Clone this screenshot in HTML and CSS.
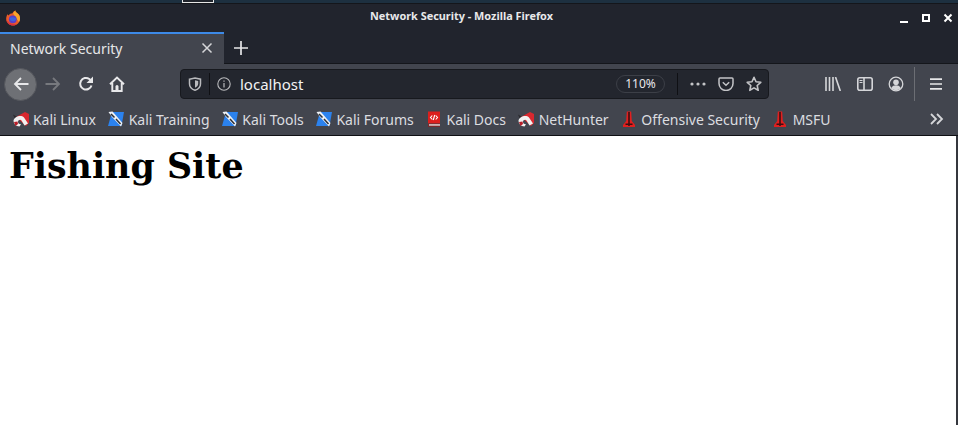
FILE: index.html
```html
<!DOCTYPE html>
<html lang="en">
<head>
<meta charset="utf-8">
<title>Network Security</title>
<link rel="stylesheet" href="styles.css">
</head>
<body>
<div class="desktop-strip"><span class="desk-thumb"></span></div>
<div class="window">
  <header class="titlebar">
    <svg class="ff-logo" viewBox="0 0 16 16" width="16" height="16">
      <path d="M1.200 9.500C1 7.500 1.600 5.500 2.600 4.200L3.500 5.500C4.500 4 6 3.200 7.500 3.200 8 2 9 1 10.500.6 10.300 1.600 10.800 2.300 11.800 2.800 14 4 15.200 6.500 15 9c-.3 3.800-3.300 6.500-7 6.500s-6.500-2.700-6.800-6z" fill="#ea5a2a"/>
      <path d="M10.500.6c-.2 1 .3 1.700 1.300 2.200 2.200 1.200 3.400 3.700 3.200 6.200-.1 1.200-.4 2.200-1 3.100L10 6.500 8.200 3.600C8.600 2.200 9.300 1 10.500.6z" fill="#f7a52b"/>
      <path d="M1.200 9.500C1.700 12.500 4.300 15.500 8 15.500c1.500 0 2.800-.4 3.900-1.200C8 14.500 3.500 13.500 1.200 9.500z" fill="#d92f3f"/>
      <circle cx="7.800" cy="9.300" r="3.900" fill="#5a3dc8"/>
      <path d="M4.600 8c1.600-1.200 4.400-1.200 6.700.4-.4 2.700-3.700 3.900-5.900 1.800z" fill="#3f63dc"/>
    </svg>
    <span class="title-text">Network Security - Mozilla Firefox</span>
    <div class="win-controls">
      <svg viewBox="0 0 10 10" width="10" height="10"><path d="M1 9h8" stroke="#fff" stroke-width="2"/></svg>
      <svg viewBox="0 0 10 10" width="10" height="10"><path d="M2 2h6v6H2z" fill="none" stroke="#fff" stroke-width="2"/></svg>
      <svg viewBox="0 0 10 10" width="10" height="10"><path d="M1.500 1.500l7 7M8.500 1.500l-7 7" stroke="#fff" stroke-width="2"/></svg>
    </div>
  </header>
  <div class="tabstrip">
    <div class="tab">
      <span class="tab-label">Network Security</span>
      <svg class="tab-close" viewBox="0 0 12 12" width="12" height="12"><path d="M1.500 1.500l9 9M10.500 1.500l-9 9" stroke="#d5d6d9" stroke-width="1.500"/></svg>
    </div>
    <svg class="new-tab" viewBox="0 0 14 14" width="14" height="14"><path d="M7 0v14M0 7h14" stroke="#e6e6e8" stroke-width="1.700"/></svg>
  </div>
  <nav class="navbar">
    <button class="back" aria-label="Back">
      <svg viewBox="0 0 16 16" width="16" height="16"><path d="M15.500 8H2M8 2L2 8l6 6" fill="none" stroke="#e8e8ea" stroke-width="1.800"/></svg>
    </button>
    <svg class="nav-icon fwd" viewBox="0 0 16 16" width="16" height="16"><path d="M.5 8H14M8 2l6 6-6 6" fill="none" stroke="#77797e" stroke-width="1.800"/></svg>
    <svg class="nav-icon reload" viewBox="0 0 16 16" width="16" height="16"><path d="M13.500 9.500A5.800 5.800 0 1 1 11.300 3L13.500 5" fill="none" stroke="#e8e8ea" stroke-width="2"/><path d="M15 .5V7H8.500z" fill="#e8e8ea"/></svg>
    <svg class="nav-icon home" viewBox="0 0 16 16" width="16" height="16"><path d="M1 8.300L8 1.500l7 6.800M3.300 7v8h9.400V7" fill="none" stroke="#e8e8ea" stroke-width="1.900"/><path d="M6.500 15v-4.500a1.500 1.500 0 0 1 3 0V15z" fill="#e8e8ea"/></svg>
    <div class="urlbar">
      <svg class="shield" viewBox="0 0 14 14" width="14" height="14"><path d="M1.500 2.200L7 1l5.500 1.200v4.500C12.500 10 10 12.300 7 13.300 4 12.300 1.500 10 1.500 6.700z" fill="none" stroke="#b9babd" stroke-width="1.500"/><path d="M7 3.200l3.200.8v2.800c0 1.800-1.500 3.300-3.200 4z" fill="#b9babd"/></svg>
      <span class="url-sep"></span>
      <svg class="info" viewBox="0 0 14 14" width="14" height="14"><circle cx="7" cy="7" r="6.200" fill="none" stroke="#b9babd" stroke-width="1.100"/><path d="M7 6v4.500M7 3.500v1.300" stroke="#b9babd" stroke-width="1.200"/></svg>
      <span class="url-text">localhost</span>
      <span class="zoom-pill">110%</span>
      <span class="url-sep action-sep"></span>
      <svg class="act dots" viewBox="0 0 16 4" width="16" height="4"><circle cx="2" cy="2" r="1.600" fill="#c3c4c7"/><circle cx="8" cy="2" r="1.600" fill="#c3c4c7"/><circle cx="14" cy="2" r="1.600" fill="#c3c4c7"/></svg>
      <svg class="act pocket" viewBox="0 0 16 14" width="16" height="14"><path d="M1 2a1 1 0 0 1 1-1h12a1 1 0 0 1 1 1v4.500a7 7 0 0 1-14 0z" fill="none" stroke="#c3c4c7" stroke-width="1.500"/><path d="M4.800 5.200L8 8.200l3.200-3" fill="none" stroke="#c3c4c7" stroke-width="1.500"/></svg>
      <svg class="act star" viewBox="0 0 16 16" width="16" height="16"><path d="M8 1.300l2 4.500 4.800.5-3.600 3.200 1 4.800L8 11.900l-4.200 2.400 1-4.800L1.200 6.300 6 5.800z" fill="none" stroke="#c3c4c7" stroke-width="1.600" stroke-linejoin="round"/></svg>
    </div>
    <div class="tools">
      <svg viewBox="0 0 16 14" width="16" height="14"><path d="M1 0v14M4.500 0v14M8 0v14M10.500 0l4.800 14" fill="none" stroke="#d5d6d9" stroke-width="1.600"/></svg>
      <svg viewBox="0 0 16 14" width="16" height="14"><rect x=".8" y=".8" width="14.400" height="12.400" rx="2" fill="none" stroke="#d5d6d9" stroke-width="1.600"/><path d="M7 1v12" stroke="#d5d6d9" stroke-width="1.600"/><path d="M2.500 3.500h3M2.500 5.500h3" stroke="#d5d6d9"/></svg>
      <svg viewBox="0 0 16 16" width="16" height="16"><circle cx="8" cy="8" r="6.800" fill="none" stroke="#d5d6d9" stroke-width="1.300"/><circle cx="8" cy="6.300" r="2.800" fill="#d5d6d9"/><path d="M3.300 12c1-2 2.800-2.700 4.700-2.700s3.700.7 4.700 2.700c-1.200 1.400-2.900 2.100-4.700 2.100S4.500 13.400 3.300 12z" fill="#d5d6d9"/></svg>
    </div>
    <span class="tool-sep"></span>
    <svg class="menu" viewBox="0 0 12 12" width="12" height="12"><path d="M0 1.200h12M0 6h12M0 10.800h12" stroke="#e6e6e8" stroke-width="1.700"/></svg>
  </nav>
  <div class="bookmarks">
    <a class="bm"><svg class="fav" viewBox="0 0 16 16"><use href="#kali-red"/></svg>Kali Linux</a>
    <a class="bm"><svg class="fav" viewBox="0 0 16 16"><use href="#kali-blue"/></svg>Kali Training</a>
    <a class="bm"><svg class="fav" viewBox="0 0 16 16"><use href="#kali-blue"/></svg>Kali Tools</a>
    <a class="bm"><svg class="fav" viewBox="0 0 16 16"><use href="#kali-blue"/></svg>Kali Forums</a>
    <a class="bm"><svg class="fav" viewBox="0 0 16 16"><use href="#kali-doc"/></svg>Kali Docs</a>
    <a class="bm"><svg class="fav" viewBox="0 0 16 16"><use href="#kali-red"/></svg>NetHunter</a>
    <a class="bm"><svg class="fav" viewBox="0 0 16 16"><use href="#offsec"/></svg>Offensive Security</a>
    <a class="bm"><svg class="fav" viewBox="0 0 16 16"><use href="#offsec"/></svg>MSFU</a>
    <svg class="more" viewBox="0 0 14 12" width="14" height="12"><path d="M1 1l5 5-5 5M7 1l5 5-5 5" fill="none" stroke="#d5d6d9" stroke-width="1.800"/></svg>
  </div>
  <main class="page"><h1 class="page-title">Fishing Site</h1></main>
</div>
<svg class="defs" width="0" height="0" aria-hidden="true">
  <defs>
    <g id="kali-red">
      <path d="M3 6L12 1l4 2v9l-3 3z" fill="#d8282f"/>
      <path d="M.5 9.500C1.500 5.500 8 3.500 11 6.500l4 6-3.500 2-3-5C7.500 8 5 8.800 5 11c0 1.300 1.300 2.300 3 2.300L6.500 15.500C3 15.500.5 12.500.5 9.500z" fill="#f1f1f1"/>
      <path d="M0 3.500l3.500 2-2 1.500z" fill="#2a2a2e"/>
      <path d="M1 11l3.500-.5.5 2.500-2.500 2z" fill="#b71d28"/>
    </g>
    <g id="kali-blue">
      <path d="M4 1h12l-2.500 14H0z" fill="#2b82ee"/>
      <path d="M.5 1l4-.5 10 11.500-1.500 3.500L4 6z" fill="#eef1f5"/>
      <path d="M3 3l3.500 3.500M8 8l4.500 5" stroke="#2b2f37" stroke-width="1.500"/>
    </g>
    <g id="kali-doc">
      <path d="M2 .5h12v12H2z" fill="#dc1f1d"/>
      <path d="M2 12.500h12V16H2z" fill="#7a2a2c"/>
      <path d="M3 13.300h11v1.300H3z" fill="#ececec"/>
      <path d="M6.300 4.500L4.500 6.500l1.800 2M9.700 4.500l1.800 2-1.800 2M8.700 4l-1.400 5" fill="none" stroke="#fff" stroke-width="1.100"/>
    </g>
    <g id="offsec">
      <path d="M5.800 .5h4.400l.6 9.500 3.200 4v2h-12v-2l3.200-4z" fill="#e01f1f"/>
      <path d="M7.200 1h1.600v14H7.200zM4.500 12.500h7V14h-7z" fill="#3c0f10"/>
    </g>
  </defs>
</svg>
</body>
</html>
```

FILE: styles.css
```css
* { box-sizing: border-box; }
html, body { margin: 0; height: 100%; overflow: hidden; background: #fff; }
body { display: flex; flex-direction: column; font-family: "Noto Sans", sans-serif; }

.desktop-strip { height: 3px; background: #1d3040; flex: none; }
.desk-thumb { display: block; margin-left: 182px; width: 32px; height: 3px; border: 1px solid #e6e6e6; border-top: 0; background: #20242c; }

.window { flex: 1; display: flex; flex-direction: column; min-height: 0; border-right: 2px solid #35373e; }

.titlebar { height: 29px; flex: none; background: #21242d; display: flex; align-items: center; padding: 0 5px 1px 5px; position: relative; margin-right: -2px; border-top: 1px solid #14161b; }
.ff-logo { flex: none; margin-top: 1px; }
.title-text { position: absolute; left: 370px; top: 4px; font-size: 10.9px; line-height: 16px; font-weight: 700; color: #e8e8ea; white-space: nowrap; }
.win-controls { margin-left: auto; display: flex; gap: 12px; }

.tabstrip { height: 32px; flex: none; background: #21242d; display: flex; align-items: center; margin-right: -2px; border-bottom: 1px solid #14161b; }
.tab { width: 224px; height: 32px; margin-bottom: -1px; background: #42454e; border-top: 2px solid #3d8ae8; display: flex; align-items: center; padding: 0 11px 2px 10px; color: #e6e7e9; align-self: flex-start; }
.tab-label { font-size: 14px; flex: 1; white-space: nowrap; }
.new-tab { margin-left: 10px; }

.navbar { height: 40px; flex: none; background: #42454e; display: flex; align-items: center; padding: 0 15px 0 4px; margin-right: -2px; }
.back { width: 33px; height: 33px; border-radius: 50%; background: #6e7075; border: 1px solid #55575d; padding: 0; display: flex; align-items: center; justify-content: center; flex: none; }
.nav-icon { flex: none; }
.fwd { margin-left: 8px; }
.reload { margin-left: 17px; }
.home { margin-left: 15px; }
.urlbar { width: 589px; height: 30px; margin-left: 55px; background: #23262e; border: 1px solid #17191e; border-radius: 4px; display: flex; align-items: center; flex: none; color: #f2f2f3; }
.shield { margin-left: 7px; flex: none; }
.url-sep { width: 1px; height: 22px; background: #0f1014; flex: none; margin-left: 7px; }
.info { margin-left: 7px; flex: none; }
.url-text { margin-left: 9px; font-size: 15px; flex: 1; }
.zoom-pill { width: 49px; height: 18px; border: 1px solid #3c3f47; border-radius: 9px; font-size: 12px; line-height: 16px; text-align: center; color: #e8e8ea; flex: none; }
.action-sep { margin-left: 12px; }
.act { flex: none; }
.dots { margin-left: 12px; }
.pocket { margin-left: 12px; }
.star { margin-left: 12px; margin-right: 6px; }
.tools { display: flex; align-items: center; gap: 15.500px; margin-left: 56px; }
.tool-sep { width: 1px; height: 34px; background: #6c6e74; margin-left: 10px; flex: none; }
.menu { margin-left: 15px; flex: none; }

.bookmarks { height: 32px; flex: none; background: #42454e; border-bottom: 1px solid #0f1014; display: flex; align-items: center; padding: 0 14px 1px 12.500px; gap: 12.300px; margin-right: -2px; }
.bm { display: flex; align-items: center; gap: 4.400px; font-size: 14px; color: #dcdde0; white-space: nowrap; }
.fav { width: 16px; height: 16px; flex: none; }
.more { margin-left: auto; }

.page { flex: 1; background: #fff; padding: 8px 9px; min-height: 0; }
.page-title { margin: 0; font-family: "DejaVu Serif", serif; font-size: 34.85px; line-height: 44px; font-weight: 700; color: #000; }

.defs { position: absolute; }
```
